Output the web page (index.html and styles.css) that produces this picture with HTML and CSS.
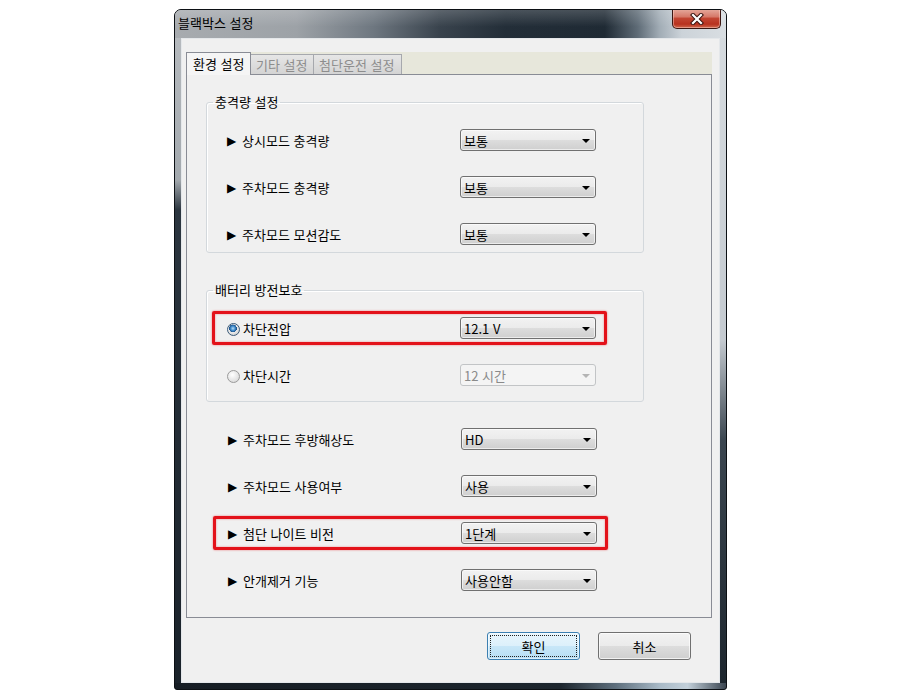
FILE: index.html
```html
<!DOCTYPE html>
<html lang="ko">
<head>
<meta charset="utf-8">
<title>블랙박스 설정</title>
<link rel="stylesheet" href="styles.css">
</head>
<body>
<div class="window">
  <div class="titlebar">
    <span class="title">블랙박스 설정</span>
    <button class="close" aria-label="닫기">
      <svg width="14" height="12" viewBox="0 0 14 12">
        <path d="M3 2 L11 10 M11 2 L3 10" stroke="#3a1410" stroke-width="4.2" stroke-linecap="square" fill="none"/>
        <path d="M3 2 L11 10 M11 2 L3 10" stroke="#ffffff" stroke-width="2.2" stroke-linecap="square" fill="none"/>
      </svg>
    </button>
  </div>
  <div class="client">
    <div class="tabs">
      <div class="tab active">환경 설정</div>
      <div class="tab">기타 설정</div>
      <div class="tab">첨단운전 설정</div>
    </div>
    <div class="panel">
      <fieldset class="group g1">
        <legend>충격량 설정</legend>
        <div class="rows">
          <div class="row"><span class="label"><span class="arrow">▶</span>상시모드 충격량</span><div class="combo"><span>보통</span><i class="caret"></i></div></div>
          <div class="row"><span class="label"><span class="arrow">▶</span>주차모드 충격량</span><div class="combo"><span>보통</span><i class="caret"></i></div></div>
          <div class="row"><span class="label"><span class="arrow">▶</span>주차모드 모션감도</span><div class="combo"><span>보통</span><i class="caret"></i></div></div>
        </div>
      </fieldset>
      <fieldset class="group g2">
        <legend>배터리 방전보호</legend>
        <div class="rows">
          <div class="row hl"><span class="label"><span class="radio checked"></span>차단전압</span><div class="combo"><span>12.1 V</span><i class="caret"></i></div></div>
          <div class="row"><span class="label"><span class="radio"></span>차단시간</span><div class="combo disabled"><span>12 시간</span><i class="caret"></i></div></div>
        </div>
      </fieldset>
      <div class="rows loose">
        <div class="row"><span class="label"><span class="arrow">▶</span>주차모드 후방해상도</span><div class="combo"><span>HD</span><i class="caret"></i></div></div>
        <div class="row"><span class="label"><span class="arrow">▶</span>주차모드 사용여부</span><div class="combo"><span>사용</span><i class="caret"></i></div></div>
        <div class="row hl"><span class="label"><span class="arrow">▶</span>첨단 나이트 비전</span><div class="combo"><span>1단계</span><i class="caret"></i></div></div>
        <div class="row"><span class="label"><span class="arrow">▶</span>안개제거 기능</span><div class="combo"><span>사용안함</span><i class="caret"></i></div></div>
      </div>
    </div>
    <div class="buttons">
      <button class="btn default"><span class="focus">확인</span></button>
      <button class="btn">취소</button>
    </div>
  </div>
</div>
</body>
</html>
```

FILE: styles.css
```css
* { box-sizing: border-box; }

html, body {
  margin: 0;
  padding: 0;
  background: #ffffff;
}

body {
  font-family: "Noto Sans CJK KR", "Noto Sans", sans-serif;
  font-size: 13px;
  color: #000;
}

.window {
  width: 553px;
  height: 681px;
  margin: 9px 0 0 174px;
  display: flex;
  flex-direction: column;
  padding: 0 6px 6px;
  border: 1px solid #0c1014;
  border-radius: 7px 7px 3px 3px;
  overflow: hidden;
  background:
    linear-gradient(to right, #161d24 0, #1d262e 70%, #5e6f7d 80%, #a9bac7 88%, #c3d0da 93%, #3a4550 100%) bottom / 100% 6px no-repeat,
    linear-gradient(to bottom, #b9bdc1 0, #a3a9ae 170px, #2b353f 200px, #1a222a 100%) left / 6px 100% no-repeat,
    linear-gradient(to bottom, #d7dce0 0, #c4cad0 330px, #3b4650 430px, #1c252d 100%) right / 6px 100% no-repeat,
    #1e2731;
}

.titlebar {
  height: 28px;
  margin: 0 -6px;
  display: flex;
  align-items: flex-start;
  justify-content: space-between;
  background:
    linear-gradient(to bottom, rgba(255,255,255,0.18), rgba(255,255,255,0) 60%),
    linear-gradient(to right, #a7abaf 0%, #9da2a7 22%, #6e7780 36%, #39434d 48%, #232e38 60%, #1f2a34 78%, #5f6c77 84%, #a2adb6 88%, #ccd3d9 92%, #d9dee2 100%);
}

.title {
  padding: 6px 0 0 3px;
  line-height: 14px;
  color: #000;
}

.close {
  width: 49px;
  height: 20px;
  margin: -1px 5px 0 0;
  padding: 0;
  border: 1px solid #3b1712;
  border-top: none;
  border-radius: 0 0 5px 5px;
  display: flex;
  align-items: center;
  justify-content: center;
  background: linear-gradient(to bottom, #e6ab9e 0%, #d67a6a 40%, #c24532 50%, #b8321f 80%, #d06a4f 100%);
  box-shadow: inset 0 0 0 1px rgba(255,220,210,0.45);
}

.client {
  flex: 1;
  display: flex;
  flex-direction: column;
  background: #f0f0f0;
  border: 1px solid #e4e7ea;
  padding: 13px 7px 0 4px;
}

.tabs {
  position: relative;
  z-index: 1;
  height: 22px;
  display: flex;
  align-items: flex-end;
  background: #e7e7db;
}

.tab {
  height: 20px;
  padding: 0 5px;
  line-height: 19px;
  color: #8d8d8d;
  border: 1px solid #a6a8ad;
  border-bottom: none;
  border-left: none;
  background: linear-gradient(to bottom, #e6e6e6, #d4d4d4);
  white-space: nowrap;
}

.tab:nth-child(2) { width: 63px; }
.tab:nth-child(3) { width: 88px; }

.tab.active {
  width: 65px;
  height: 23px;
  margin-bottom: -1px;
  padding: 0 6px;
  line-height: 22px;
  color: #000;
  border: 1px solid #898c95;
  border-bottom: none;
  background: #f5f5f5;
}

.panel {
  height: 544px;
  border: 1px solid #898c95;
  background: #f0f0f0;
  padding: 20px 0 0 19px;
  display: flex;
  flex-direction: column;
  align-items: flex-start;
}

.group {
  width: 438px;
  margin: 0;
  padding: 20px 0 7px 0;
  border: 1px solid #d3d8dc;
  border-radius: 3px;
  box-shadow: inset 1px 1px 0 #ffffff;
}

.group legend {
  margin-left: 6px;
  padding: 0 2px;
  line-height: 14px;
  height: 14px;
}

.group .rows {
  padding-left: 20px;
}

.g2 {
  margin-top: 30px;
  padding-bottom: 15px;
}

.rows {
  display: flex;
  flex-direction: column;
  gap: 25px;
}

.rows.loose {
  margin-top: 26px;
  padding-left: 22px;
}

.row {
  display: flex;
  align-items: center;
  height: 22px;
  width: 369px;
}

.row.hl {
  box-sizing: content-box;
  margin: -6px -11px -6px -15px;
  padding: 3px 8px 3px 12px;
  border: 3px solid #e3121a;
  border-radius: 2px;
  box-shadow: 0 0 2px rgba(230, 20, 30, 0.6), inset 0 0 2px rgba(230, 20, 30, 0.5);
}

.label {
  flex: 0 0 233px;
  display: flex;
  align-items: center;
  line-height: 14px;
  padding-top: 2px;
  white-space: nowrap;
}

.arrow {
  display: inline-block;
  width: 15px;
  font-family: "DejaVu Sans", sans-serif;
  font-size: 12px;
  line-height: 12px;
}

.radio {
  width: 13px;
  height: 13px;
  margin-right: 3px;
  border-radius: 50%;
  border: 1px solid #9a9a9a;
  background: radial-gradient(circle at 40% 35%, #ffffff 0, #e6e6e6 55%, #cfcfcf 100%);
}

.radio.checked {
  border-color: #3a5a78;
  background:
    radial-gradient(circle at 45% 40%, #b8dcf5 0, #3d8acb 25%, #1c4f86 42%, rgba(0,0,0,0) 45%),
    radial-gradient(circle at 40% 35%, #ffffff 0, #e2e2e2 60%, #bdbdbd 100%);
}

.combo {
  flex: 0 0 136px;
  height: 22px;
  border: 1px solid #707070;
  border-radius: 3px;
  display: flex;
  align-items: center;
  justify-content: space-between;
  padding: 1px 5px 0 3px;
  background: linear-gradient(to bottom, #f2f2f2 0%, #ebebeb 50%, #dddddd 51%, #cfcfcf 100%);
  box-shadow: inset 0 0 0 1px rgba(255,255,255,0.6);
  line-height: 14px;
}

.caret {
  width: 0;
  height: 0;
  border-left: 4px solid transparent;
  border-right: 4px solid transparent;
  border-top: 4px solid #000;
}

.combo.disabled {
  border-color: #c2c4c6;
  background: #f4f4f4;
  box-shadow: none;
  color: #8a8a8a;
}

.combo.disabled .caret {
  border-top-color: #b4b4b4;
}

.buttons {
  display: flex;
  justify-content: flex-end;
  gap: 18px;
  margin-top: 14px;
  padding-right: 21px;
}

.btn {
  width: 93px;
  height: 28px;
  padding: 0;
  border: 1px solid #707070;
  border-radius: 3px;
  font-family: inherit;
  font-size: 13px;
  color: #000;
  background: linear-gradient(to bottom, #f2f2f2 0%, #ebebeb 50%, #dddddd 51%, #cfcfcf 100%);
  box-shadow: inset 0 0 0 1px rgba(255,255,255,0.7);
}

.btn.default {
  border-color: #3c7fb1;
  background: linear-gradient(to bottom, #e8f5fc 0%, #dcf0fb 50%, #c8e7f8 51%, #b7def4 100%);
  box-shadow: inset 0 0 0 1px rgba(255,255,255,0.5);
  padding: 2px;
}

.btn .focus {
  display: flex;
  align-items: center;
  justify-content: center;
  width: 100%;
  height: 100%;
  border: 1px dotted #222;
}
```
